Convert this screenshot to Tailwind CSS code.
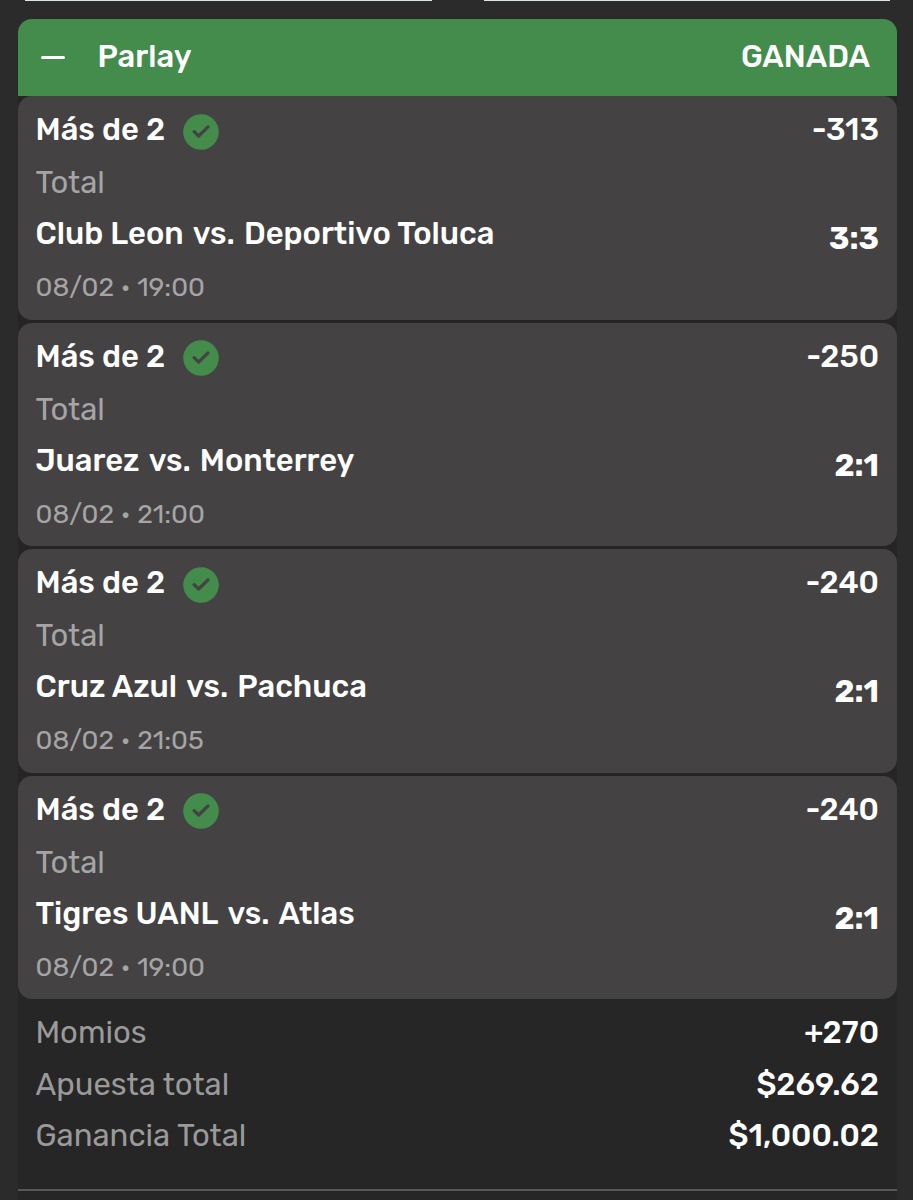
<!DOCTYPE html>
<html lang="es">
<head>
    <meta charset="UTF-8">
    <meta name="viewport" content="width=device-width, initial-scale=1.0">
    <title>Parlay</title>
    <script src="https://cdn.jsdelivr.net/npm/@tailwindcss/browser@4"></script>
</head>
<body class="bg-[#2b2b2b] h-[1200px] overflow-hidden font-[Rubik,Roboto,sans-serif] text-[31px] leading-[36px] text-white font-medium whitespace-nowrap">

    <svg class="hidden">
        <symbol id="check" viewBox="0 0 36 36">
            <circle cx="18" cy="18" r="17.8" fill="#448c4c"/>
            <path d="M11.1 17.6 L15.7 22 L25 12.9" fill="none" stroke="#444243" stroke-width="3.2" stroke-linecap="round" stroke-linejoin="round"/>
        </symbol>
    </svg>

    <!-- bottom edge of the two buttons above the ticket -->
    <div class="flex h-[18.5px] justify-between pl-[25px] pr-[23px]">
        <div class="h-px w-[407px] bg-[#dfe5e2]"></div>
        <div class="h-px w-[406px] bg-[#dfe5e2]"></div>
    </div>

    <main class="ml-[17.5px] w-[879.5px] bg-[#262626]">
        <div class="bg-[#2b2b2b]">
            <header class="flex h-[77.7px] items-center justify-between rounded-t-[14px] bg-[#448c4c] pl-[23.5px] pr-[27px]">
                <div class="flex items-center">
                    <span class="h-[3.5px] w-[24px] rounded-full bg-white"></span>
                    <span class="ml-[32.5px] -mt-[1px]">Parlay</span>
                </div>
                <span class="-mt-[1px]">GANADA</span>
            </header>
        </div>

        <div class="flex flex-col gap-[3px] bg-[#262425]">
            <section class="h-[223.5px] rounded-[14px] bg-[#444243] pt-[8px] pl-[18px] pr-[18px]">
                <div class="flex h-[52px] items-center justify-between">
                    <div class="flex items-center">Más de 2<svg class="ml-[18px] mt-[3px] size-9"><use href="#check"/></svg></div>
                    <span>-313</span>
                </div>
                <div class="h-[54px] leading-[54px] font-normal text-[#a5a5a5]">Total</div>
                <div class="flex h-[48px] items-center justify-between">
                    <span>Club Leon <span class="mx-[2px]">vs.</span> Deportivo Toluca</span>
                    <span class="pt-[10px] font-bold">3:3</span>
                </div>
                <div class="h-[58px] leading-[58px] text-[26.6px] font-normal text-[#a5a5a5]">08/02 • 19:00</div>
            </section>

            <section class="h-[223.5px] rounded-[14px] bg-[#444243] pt-[8px] pl-[18px] pr-[18px]">
                <div class="flex h-[52px] items-center justify-between">
                    <div class="flex items-center">Más de 2<svg class="ml-[18px] mt-[3px] size-9"><use href="#check"/></svg></div>
                    <span>-250</span>
                </div>
                <div class="h-[54px] leading-[54px] font-normal text-[#a5a5a5]">Total</div>
                <div class="flex h-[48px] items-center justify-between">
                    <span>Juarez <span class="mx-[2px]">vs.</span> Monterrey</span>
                    <span class="pt-[10px] font-bold">2:1</span>
                </div>
                <div class="h-[58px] leading-[58px] text-[26.6px] font-normal text-[#a5a5a5]">08/02 • 21:00</div>
            </section>

            <section class="h-[223.5px] rounded-[14px] bg-[#444243] pt-[8px] pl-[18px] pr-[18px]">
                <div class="flex h-[52px] items-center justify-between">
                    <div class="flex items-center">Más de 2<svg class="ml-[18px] mt-[3px] size-9"><use href="#check"/></svg></div>
                    <span>-240</span>
                </div>
                <div class="h-[54px] leading-[54px] font-normal text-[#a5a5a5]">Total</div>
                <div class="flex h-[48px] items-center justify-between">
                    <span>Cruz Azul <span class="mx-[2px]">vs.</span> Pachuca</span>
                    <span class="pt-[10px] font-bold">2:1</span>
                </div>
                <div class="h-[58px] leading-[58px] text-[26.6px] font-normal text-[#a5a5a5]">08/02 • 21:05</div>
            </section>

            <section class="h-[223.5px] rounded-[14px] bg-[#444243] pt-[8px] pl-[18px] pr-[18px]">
                <div class="flex h-[52px] items-center justify-between">
                    <div class="flex items-center">Más de 2<svg class="ml-[18px] mt-[3px] size-9"><use href="#check"/></svg></div>
                    <span>-240</span>
                </div>
                <div class="h-[54px] leading-[54px] font-normal text-[#a5a5a5]">Total</div>
                <div class="flex h-[48px] items-center justify-between">
                    <span>Tigres UANL <span class="mx-[2.6px]">vs.</span> Atlas</span>
                    <span class="pt-[10px] font-bold">2:1</span>
                </div>
                <div class="h-[58px] leading-[58px] text-[26.6px] font-normal text-[#a5a5a5]">08/02 • 19:00</div>
            </section>
        </div>

        <footer class="h-[191.6px] border-b-2 border-[#575757] pt-[8.2px] pl-[18px] pr-[18px] leading-[51.3px]">
            <div class="flex justify-between">
                <span class="font-normal text-[#9a9a9a]">Momios</span>
                <span>+270</span>
            </div>
            <div class="flex justify-between">
                <span class="font-normal text-[#9a9a9a]">Apuesta total</span>
                <span>$269.62</span>
            </div>
            <div class="flex justify-between">
                <span class="font-normal text-[#9a9a9a]">Ganancia Total</span>
                <span>$1,000.02</span>
            </div>
        </footer>
        <div class="h-[10px]"></div>
    </main>

</body>
</html>
